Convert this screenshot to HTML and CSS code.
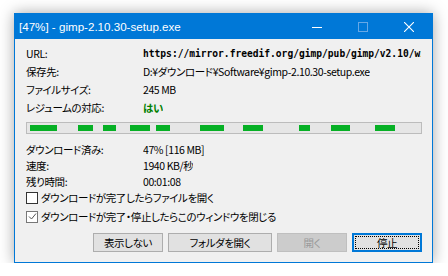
FILE: index.html
```html
<!DOCTYPE html>
<html lang="ja">
<head>
	<meta charset="UTF-8">
	<title>[47%] - gimp-2.10.30-setup.exe</title>
<link rel="stylesheet" href="styles.css">
</head>
<body>
<div class="window">
	<div class="titlebar">
		<span class="title">[47%] - gimp-2.10.30-setup.exe</span>
		<div class="caption">
			<span class="cap_btn"><svg width="10" height="10" viewBox="0 0 10 10"><path d="M0 5.5h10" stroke="#fff" stroke-width="1"/></svg></span>
			<span class="cap_btn"><svg width="10" height="10" viewBox="0 0 10 10"><rect x="0.5" y="0.5" width="9" height="9" fill="none" stroke="#66a8e6" stroke-width="1"/></svg></span>
			<span class="cap_btn"><svg width="10" height="10" viewBox="0 0 10 10"><path d="M0 0L10 10M10 0L0 10" stroke="#fff" stroke-width="1.1"/></svg></span>
		</div>
	</div>
	<div class="client">
		<div class="info">
			<div class="row"><span class="label">URL:</span><span class="value url">https://mirror.freedif.org/gimp/pub/gimp/v2.10/windows/gimp-2.10.30-setup.exe</span></div>
			<div class="row"><span class="label">保存先:</span><span class="value">D:¥ダウンロード¥Software¥gimp-2.10.30-setup.exe</span></div>
			<div class="row"><span class="label">ファイルサイズ:</span><span class="value">245 MB</span></div>
			<div class="row"><span class="label">レジュームの対応:</span><span class="value yes">はい</span></div>
		</div>
		<div class="bar">
			<span class="seg" style="left:3px;width:27px"></span>
			<span class="seg" style="left:51px;width:15px"></span>
			<span class="seg" style="left:76px;width:13px"></span>
			<span class="seg" style="left:103px;width:20px"></span>
			<span class="seg" style="left:129px;width:14px"></span>
			<span class="seg" style="left:173px;width:24px"></span>
			<span class="seg" style="left:216px;width:20px"></span>
			<span class="seg" style="left:272px;width:11px"></span>
			<span class="seg" style="left:304px;width:19px"></span>
			<span class="seg" style="left:348px;width:20px"></span>
		</div>
		<div class="stats">
			<div class="row small"><span class="label">ダウンロード済み:</span><span class="value">47% [116 MB]</span></div>
			<div class="row small"><span class="label">速度:</span><span class="value">1940 KB/秒</span></div>
			<div class="row small"><span class="label">残り時間:</span><span class="value">00:01:08</span></div>
		</div>
		<div class="checks">
			<label class="check"><span class="box"></span>ダウンロードが完了したらファイルを開く</label>
			<label class="check"><span class="box checked"><svg width="11" height="11" viewBox="0 0 11 11"><path d="M2 5.5L4.5 8L9 2.5" fill="none" stroke="#555" stroke-width="1"/></svg></span>ダウンロードが完了・停止したらこのウィンドウを閉じる</label>
		</div>
		<div class="buttons">
			<a href="#" class="btn">表示しない</a>
			<a href="#" class="btn wide">フォルダを開く</a>
			<a href="#" class="btn disabled">開く</a>
			<a href="#" class="btn default"><span class="focus">停止</span></a>
		</div>
	</div>
</div>
</body>
</html>
```

FILE: styles.css
```css
	body{
		margin: 0;
		background: #ffffff;
		font-family: "Noto Sans CJK JP", "Noto Sans", sans-serif;
		font-size: 10.5px;
		font-feature-settings: "palt";
		letter-spacing: -0.4px;
		color: #000;
	}
	.window{
		margin: 13px 0 0 14px;
		width: 417px;
		height: 248px;
		border: 1px solid #0078d7;
		background: #f0f0f0;
		box-shadow: 0 0 14px rgba(0,0,0,0.35);
		display: flex;
		flex-direction: column;
	}
	.titlebar{
		height: 25px;
		background: #0078d7;
		display: flex;
		align-items: center;
		justify-content: space-between;
		padding-left: 4px;
	}
	.title{
		color: #fff;
		font-family: "Liberation Sans", "Noto Sans", sans-serif;
		font-size: 11.6px;
		letter-spacing: 0;
	}
	.caption{
		display: flex;
		height: 100%;
	}
	.cap_btn{
		width: 46px;
		display: flex;
		align-items: center;
		justify-content: center;
	}
	.client{
		flex: 1;
		padding: 5px 10px 0 11px;
		display: flex;
		flex-direction: column;
	}
	.row{
		display: flex;
		height: 18px;
		align-items: center;
		white-space: nowrap;
	}
	.row.small{
		height: 16px;
	}
	.label{
		width: 117px;
		flex: none;
	}
	.value{
		overflow: hidden;
	}
	.url{
		font-family: "DejaVu Sans Mono", monospace;
		font-weight: bold;
		font-size: 9.6px;
		letter-spacing: 0;
		width: 278px;
	}
	.yes{
		color: #008000;
		font-weight: bold;
	}
	.bar{
		position: relative;
		margin-top: 6px;
		width: 394px;
		height: 10px;
		border: 1px solid #bcbcbc;
		background: #e6e6e6;
	}
	.seg{
		position: absolute;
		top: 2px;
		height: 6px;
		background: #06b025;
	}
	.stats{
		margin-top: 7px;
	}
	.checks{
		margin-top: -1px;
	}
	.check{
		display: flex;
		align-items: center;
		height: 19px;
		white-space: nowrap;
	}
	.box{
		width: 10px;
		height: 10px;
		border: 1px solid #333;
		background: #fff;
		margin-right: 3px;
		display: flex;
		align-items: center;
		justify-content: center;
	}
	.box.checked{
		border-color: #777;
	}
	.box svg{
		flex: none;
	}
	.buttons{
		margin-top: 7px;
		display: flex;
		justify-content: flex-end;
		gap: 5px;
	}
	.btn{
		width: 68px;
		height: 17px;
		border: 1px solid #adadad;
		background: #e1e1e1;
		color: #000;
		text-decoration: none;
		display: flex;
		align-items: center;
		justify-content: center;
	}
	.btn.wide{
		width: 102px;
	}
	.btn.disabled{
		background: #cccccc;
		border-color: #bfbfbf;
		color: #9a9a9a;
	}
	.btn.default{
		width: 66px;
		height: 15px;
		border: 2px solid #0078d7;
	}
	.focus{
		width: 64px;
		height: 13px;
		border: 1px dotted #000;
		box-sizing: border-box;
		display: flex;
		align-items: center;
		justify-content: center;
	}
```
